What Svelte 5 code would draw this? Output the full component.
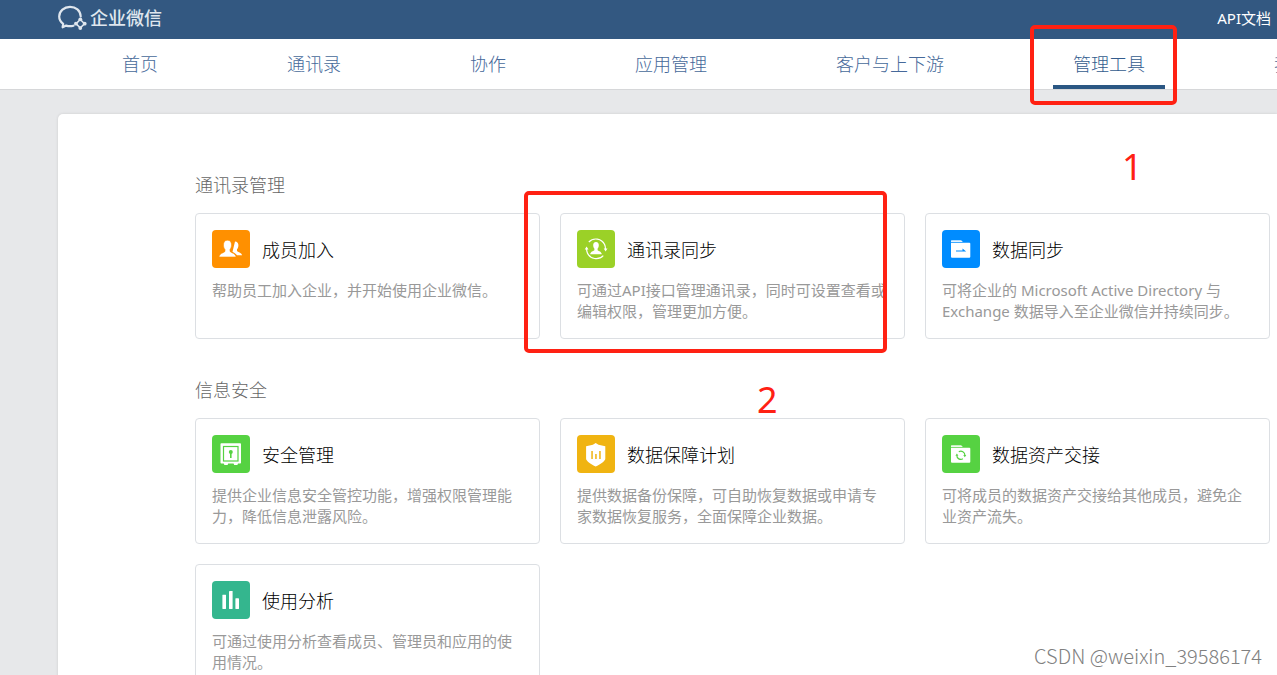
<script lang="ts">
    type Tool = { icon: string; color: string; title: string; text: string };

    let current = $state('管理工具');

    const menu = ['首页', '通讯录', '协作', '应用管理', '客户与上下游', '管理工具', '我的企业'];

    const groups: { name: string; tools: Tool[] }[] = [
        {
            name: '通讯录管理',
            tools: [
                { icon: 'members', color: '#ff9000', title: '成员加入', text: '帮助员工加入企业，并开始使用企业微信。' },
                { icon: 'contacts', color: '#9bd127', title: '通讯录同步', text: '可通过API接口管理通讯录，同时可设置查看或编辑权限，管理更加方便。' },
                { icon: 'folder', color: '#008cff', title: '数据同步', text: '可将企业的 Microsoft Active Directory 与 Exchange 数据导入至企业微信并持续同步。' },
            ],
        },
        {
            name: '信息安全',
            tools: [
                { icon: 'safe', color: '#56d242', title: '安全管理', text: '提供企业信息安全管控功能，增强权限管理能力，降低信息泄露风险。' },
                { icon: 'shield', color: '#f0b411', title: '数据保障计划', text: '提供数据备份保障，可自助恢复数据或申请专家数据恢复服务，全面保障企业数据。' },
                { icon: 'transfer', color: '#56d242', title: '数据资产交接', text: '可将成员的数据资产交接给其他成员，避免企业资产流失。' },
                { icon: 'chart', color: '#34b68e', title: '使用分析', text: '可通过使用分析查看成员、管理员和应用的使用情况。' },
            ],
        },
    ];
</script>

<div class="page">
    <header class="topbar">
        <a class="logo" href="#home">
            <svg width="29" height="26" viewBox="0 0 29 26" fill="none" stroke="currentColor">
                <path d="M22.700 11.500C22.400 5.500 17.800 1.800 12 1.800S1.200 6 1.200 11.500c0 3.200 1.600 5.600 4 7.400L4.600 22.300l3.600-1.700c2.300.8 4.800.8 7.300.1" stroke-width="2.200" stroke-linecap="round" stroke-linejoin="round" />
                <path d="M22.300 14.500l4.200 4.200-4.200 4.200-4.200-4.200z" stroke-width="1.600" />
                <g fill="currentColor" stroke="none">
                    <circle cx="22.300" cy="14.300" r="1.900" />
                    <circle cx="26.700" cy="18.700" r="1.900" />
                    <circle cx="22.300" cy="23.100" r="1.900" />
                    <circle cx="17.900" cy="18.700" r="1.900" />
                </g>
            </svg>
            <span>企业微信</span>
        </a>
        <a class="docs" href="#api">API文档</a>
    </header>

    <nav class="menu">
        {#each menu as item}
            <a href="#{item}" class:active={item === current} onclick={() => (current = item)}>{item}</a>
        {/each}
    </nav>

    <main class="panel">
        {#each groups as group}
            <section>
                <h2>{group.name}</h2>
                <div class="cards">
                    {#each group.tools as tool}
                        <a class="card" href="#{tool.title}">
                            <div class="card-head">
                                <svg class="icon" width="38" height="38" viewBox="0 0 38 38" fill="#fff" aria-hidden="true">
                                    <rect width="38" height="38" rx="4" fill={tool.color} />
                                    {#if tool.icon === 'members'}
                                        <path d="M23 11.500c2.200 0 3.600 1.700 3.400 4.200-.1 1.600-.7 2.800-1.400 3.600v1.600c1.500 1.400 4.600 1.700 5.100 4.400H25c-1-1.900-3.200-2.600-4.500-3.600z" />
                                        <path d="M15.500 10.200c2.700 0 4.200 2 4 5-.1 2-.8 3.300-1.500 4.300v1.900c1.700 1.700 5.700 1.900 6.100 5.600H7c.3-3.700 4.300-3.900 6-5.600v-1.900c-.9-1-1.400-2.300-1.500-4.300-.2-3 1.300-5 4-5z" stroke={tool.color} stroke-width=".6" />
                                    {:else if tool.icon === 'contacts'}
                                        <g fill="none" stroke="#fff" stroke-width="1.200">
                                            <path d="M11.800 12a9.700 9.700 0 0 1 15.800 2.600q.9 1.900.9 4.300" />
                                            <path d="M26.300 25.600a9.700 9.700 0 0 1-15.900-2.700q-.9-2-.8-4.300" />
                                        </g>
                                        <path d="M7.700 19.400l1.900-3 1.900 3zM26.700 18.600h3.800l-1.900 3z" />
                                        <path d="M19 12c1.900 0 2.900 1.300 2.800 3.500-.1 1.500-.6 2.500-1.200 3.200v1.500c1.200 1 3.900 1.300 4.200 4H13.200c.3-2.700 3-3 4.200-4v-1.500c-.6-.7-1.100-1.700-1.200-3.200-.1-2.200.9-3.500 2.800-3.500z" />
                                    {:else if tool.icon === 'folder' || tool.icon === 'transfer'}
                                        <path d="M9 10.800q0-.6.6-.6h9.200q.6 0 1 .6l1 1.200H9z" opacity=".9" />
                                        <path d="M9 12.800h18.300q1 0 1 1v13q0 1-1 1H10q-1 0-1-1z" />
                                        {#if tool.icon === 'folder'}
                                            <path d="M14 20.600h6.500v-2.200l3.700 3.200H14z" fill={tool.color} />
                                        {:else}
                                            <g fill="none" stroke={tool.color} stroke-width="1.200">
                                                <path d="M16.800 16.800a4 4 0 0 1 6.100 3.500" />
                                                <path d="M20.900 23.800a4 4 0 0 1-6.100-3.500" />
                                            </g>
                                            <path d="M13.400 20.700h3l-1.500-2.200zM21.300 20h3l-1.500 2.200z" fill={tool.color} />
                                        {/if}
                                    {:else if tool.icon === 'safe'}
                                        <path d="M9.300 8.300h18.900q.8 0 .8.800v18.700q0 .8-.8.800H26l-.6 1.400h-3.200l-.6-1.400h-5.400l-.6 1.400h-3.200l-.6-1.400H9.300q-.8 0-.8-.8V9.100q0-.8.8-.8z" />
                                        <rect x="11.500" y="11.500" width="14.500" height="14.500" fill="none" stroke={tool.color} stroke-width="1.200" />
                                        <circle cx="18.800" cy="17" r="2" fill={tool.color} />
                                        <rect x="18" y="17" width="1.600" height="6" fill={tool.color} />
                                    {:else if tool.icon === 'shield'}
                                        <path d="M18.700 8l2.800 1.800 6.800 1.400v12.600c0 2.200-5.200 5.700-9.600 7.700-4.400-2-9.600-5.500-9.600-7.700V11.200l6.800-1.400z" />
                                        <path d="M14.300 16h1.500v8h-1.500zM18.200 19h1.500v5h-1.500zM22.200 16h1.500v8h-1.500z" fill={tool.color} />
                                    {:else}
                                        <rect x="10.400" y="13.700" width="3.600" height="14.300" rx=".4" />
                                        <rect x="17" y="10" width="3.600" height="18" rx=".4" />
                                        <rect x="23.400" y="17.300" width="3.600" height="10.700" rx=".4" />
                                    {/if}
                                </svg>
                                <h3>{tool.title}</h3>
                            </div>
                            <p>{tool.text}</p>
                        </a>
                    {/each}
                </div>
            </section>
        {/each}
    </main>

    <!-- step markers drawn over the page -->
    <div class="mark mark-menu"></div>
    <div class="mark mark-card"></div>
    <span class="step step-one">1</span>
    <span class="step step-two">2</span>
    <span class="watermark">CSDN @weixin_39586174</span>
</div>

<style>
    :global(body) {
        margin: 0;
        background: #e7e8ea;
    }

    .page {
        position: relative;
        display: flex;
        flex-direction: column;
        height: 100vh;
        overflow: hidden;
        font-family: "Noto Sans", "Noto Sans CJK SC", sans-serif;
    }

    a {
        color: inherit;
        text-decoration: none;
    }

    .topbar {
        display: flex;
        flex-shrink: 0;
        align-items: center;
        justify-content: space-between;
        box-sizing: border-box;
        height: 39px;
        padding: 0 6px 3px 58px;
        background: #335881;
        color: #fff;
    }

    .logo {
        display: flex;
        align-items: center;
        gap: 3px;
        font-size: 18px;
        font-weight: 500;
        line-height: 24px;
        color: #dfe6ee;
    }

    .docs {
        font-size: 15px;
        line-height: 24px;
    }

    .menu {
        display: flex;
        flex-shrink: 0;
        gap: 89px;
        height: 50px;
        padding-left: 102px;
        overflow: hidden;
        background: #fff;
        border-bottom: 1px solid #d6d7d9;
        color: #46699a;
        font-size: 18px;
        font-weight: 300;
        line-height: 50px;
        white-space: nowrap;
    }
    .menu a {
        flex-shrink: 0;
        box-sizing: border-box;
        height: 50px;
        padding: 0 20px;
    }
    .menu a.active {
        border-bottom: 4px solid #2b5783;
        color: #335c8e;
    }

    .panel {
        flex: 1 0 auto;
        margin: 24px 0 0 58px;
        padding: 59px 7px 40px 137px;
        background: #fff;
        border-radius: 5px 0 0 0;
        box-shadow: 0 0 3px rgba(0, 0, 0, 0.12);
    }

    section {
        margin-bottom: 39px;
    }

    h2 {
        margin: 0 0 16px;
        font-size: 18px;
        font-weight: 300;
        line-height: 24px;
        color: #666;
    }

    .cards {
        display: grid;
        grid-template-columns: repeat(3, 1fr);
        gap: 20px;
    }

    .card {
        padding: 16px;
        border: 1px solid #dcdfe3;
        border-radius: 4px;
    }
    .card:hover {
        border-color: #b9c3cf;
    }

    .card-head {
        display: flex;
        align-items: center;
        gap: 12px;
    }

    .icon {
        display: block;
        flex-shrink: 0;
    }

    h3 {
        margin: 0;
        padding-top: 2px;
        font-size: 18px;
        font-weight: 300;
        line-height: 24px;
        color: #000;
    }

    p {
        margin: 12px 0 0;
        font-size: 15px;
        line-height: 21px;
        color: #999;
    }

    .mark {
        position: absolute;
        box-sizing: border-box;
        border: 4px solid #ff2113;
        border-radius: 5px;
        pointer-events: none;
    }
    .mark-menu {
        top: 25px;
        left: 1030px;
        width: 147px;
        height: 80px;
    }
    .mark-card {
        top: 191px;
        left: 524px;
        width: 363px;
        height: 162px;
    }

    .step {
        position: absolute;
        font-size: 36px;
        line-height: 40px;
        color: #ff2113;
    }
    .step-one {
        top: 147px;
        left: 1122px;
    }
    .step-two {
        top: 380px;
        left: 757px;
    }

    .watermark {
        position: absolute;
        right: 15px;
        bottom: 6px;
        font-family: "Noto Sans CJK SC", sans-serif;
        font-size: 20px;
        font-weight: 300;
        line-height: 26px;
        color: #808080;
    }
</style>
